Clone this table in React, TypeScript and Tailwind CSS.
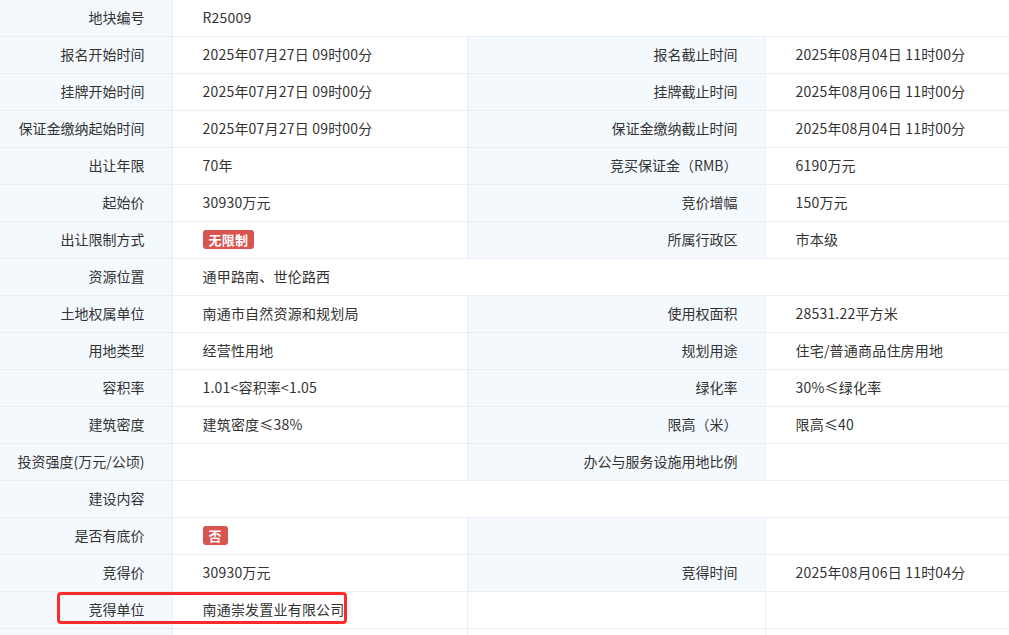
import React from 'react';

type Cell = { label: string; value?: React.ReactNode; span?: boolean };
type Row = { left: Cell; right?: Cell; rightBlank?: boolean };

function Tag({ children }: { children: React.ReactNode }) {
  return (
    <span className="inline-block rounded-[3px] bg-[#d9534f] px-[6px] text-[13px] font-bold leading-[19px] text-white">
      {children}
    </span>
  );
}

const rows: Row[] = [
  { left: { label: '地块编号', value: 'R25009', span: true } },
  {
    left: { label: '报名开始时间', value: '2025年07月27日 09时00分' },
    right: { label: '报名截止时间', value: '2025年08月04日 11时00分' },
  },
  {
    left: { label: '挂牌开始时间', value: '2025年07月27日 09时00分' },
    right: { label: '挂牌截止时间', value: '2025年08月06日 11时00分' },
  },
  {
    left: { label: '保证金缴纳起始时间', value: '2025年07月27日 09时00分' },
    right: { label: '保证金缴纳截止时间', value: '2025年08月04日 11时00分' },
  },
  {
    left: { label: '出让年限', value: '70年' },
    right: { label: '竞买保证金（RMB）', value: '6190万元' },
  },
  {
    left: { label: '起始价', value: '30930万元' },
    right: { label: '竞价增幅', value: '150万元' },
  },
  {
    left: { label: '出让限制方式', value: <Tag>无限制</Tag> },
    right: { label: '所属行政区', value: '市本级' },
  },
  { left: { label: '资源位置', value: '通甲路南、世伦路西', span: true } },
  {
    left: { label: '土地权属单位', value: '南通市自然资源和规划局' },
    right: { label: '使用权面积', value: '28531.22平方米' },
  },
  {
    left: { label: '用地类型', value: '经营性用地' },
    right: { label: '规划用途', value: '住宅/普通商品住房用地' },
  },
  {
    left: { label: '容积率', value: '1.01<容积率<1.05' },
    right: { label: '绿化率', value: '30%≤绿化率' },
  },
  {
    left: { label: '建筑密度', value: '建筑密度≤38%' },
    right: { label: '限高（米）', value: '限高≤40' },
  },
  {
    left: { label: '投资强度(万元/公顷)', value: '' },
    right: { label: '办公与服务设施用地比例', value: '' },
  },
  { left: { label: '建设内容', value: '', span: true } },
  {
    left: { label: '是否有底价', value: <Tag>否</Tag> },
    right: { label: '', value: '' },
  },
  {
    left: { label: '竞得价', value: '30930万元' },
    right: { label: '竞得时间', value: '2025年08月06日 11时04分' },
  },
  { left: { label: '竞得单位', value: '南通崇发置业有限公司' }, rightBlank: true },
  { left: { label: '', value: '' }, rightBlank: true },
];

const labelCls =
  'h-[37px] border-b border-r border-[#ebeef5] bg-[#f3f9fd] pr-[27px] text-right align-middle whitespace-nowrap';
const valueCls =
  'h-[37px] border-b border-r border-[#ebeef5] bg-white pl-[30px] text-left align-middle whitespace-nowrap tracking-[0.2px]';

export default function App() {
  return (
    <div
      className="relative h-[635px] w-[1009px] overflow-hidden bg-white text-[14px] text-[#333]"
      style={{ fontFamily: '"Noto Sans CJK SC", "Noto Sans", sans-serif' }}
    >
      <table className="-mt-px w-[1009px] table-fixed border-collapse">
        <colgroup>
          <col className="w-[172px]" />
          <col className="w-[295px]" />
          <col className="w-[298px]" />
          <col className="w-[244px]" />
        </colgroup>
        <tbody>
          {rows.map((r, i) => (
            <tr key={i}>
              <td className={labelCls}>{r.left.label}</td>
              {r.left.span ? (
                <td className={valueCls} colSpan={3}>
                  {r.left.value}
                </td>
              ) : (
                <>
                  <td className={valueCls}>{r.left.value}</td>
                  {r.rightBlank ? (
                    <>
                      <td className={valueCls}></td>
                      <td className={valueCls}></td>
                    </>
                  ) : (
                    <>
                      <td className={labelCls}>{r.right?.label}</td>
                      <td className={valueCls}>{r.right?.value}</td>
                    </>
                  )}
                </>
              )}
            </tr>
          ))}
        </tbody>
      </table>

      {/* highlight box */}
      <div className="pointer-events-none absolute left-[57px] top-[592px] h-[32px] w-[290px] rounded-[4px] border-[3px] border-[#ff2a2a]" />
    </div>
  );
}
